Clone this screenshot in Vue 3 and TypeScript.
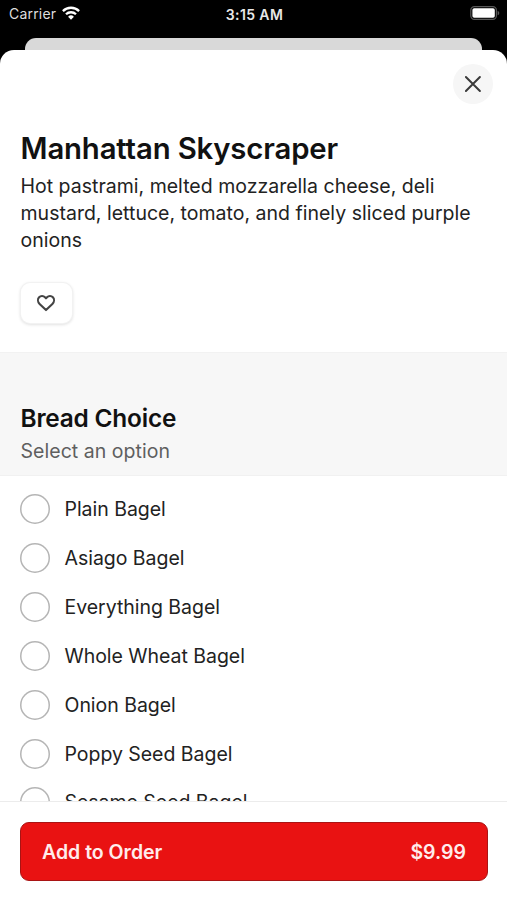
<script setup lang="ts">
import { ref } from 'vue'

const breads: string[] = [
  'Plain Bagel',
  'Asiago Bagel',
  'Everything Bagel',
  'Whole Wheat Bagel',
  'Onion Bagel',
  'Poppy Seed Bagel',
  'Sesame Seed Bagel',
]
const selected = ref<string | null>(null)
</script>

<template>
  <div class="screen">
    <header class="status">
      <div class="carrier">
        <span>Carrier</span>
        <svg class="wifi" width="18" height="14" viewBox="0 0 18 14">
          <g fill="none" stroke="#fff" stroke-width="2.3">
            <path d="M.9 5.1a11.5 11.5 0 0 1 16.2 0" />
            <path d="M4 8.3a7.1 7.1 0 0 1 10 0" />
          </g>
          <path d="M9 13.7 6.1 10.8a4.1 4.1 0 0 1 5.8 0Z" fill="#fff" />
        </svg>
      </div>
      <span class="time">3:15 AM</span>
      <svg class="battery" width="30" height="14" viewBox="0 0 30 14">
        <rect x=".8" y=".6" width="25.6" height="12.8" rx="3.6" fill="none" stroke="#585858" stroke-width="1.2" />
        <rect x="2.4" y="2.2" width="22.4" height="9.6" rx="1.8" fill="#fff" />
        <path d="M27.6 4.7c2.2.8 2.2 3.8 0 4.6Z" fill="#585858" />
      </svg>
    </header>
    <div class="behind"></div>
    <main class="sheet">
      <div class="top">
        <button class="close" aria-label="Close">
          <svg width="18" height="18" viewBox="0 0 18 18">
            <path d="m1.9 2 14 14M15.9 2l-14 14" fill="none" stroke="#3a3a3a" stroke-width="2" stroke-linecap="round" />
          </svg>
        </button>
      </div>
      <section class="item">
        <h1>Manhattan Skyscraper</h1>
        <p>Hot pastrami, melted mozzarella cheese, deli mustard, lettuce, tomato, and finely sliced purple onions</p>
        <button class="favorite" aria-label="Favorite">
          <svg width="20" height="18" viewBox="0 0 20 18">
            <path
              d="M10 16.1 3.6 9.9C1.6 7.9 1.5 4.9 3.1 3.2s4.3-1.6 5.9 0l1 1.1 1-1.1c1.6-1.6 4.3-1.7 5.9 0s1.5 4.7-.5 6.7Z"
              fill="none" stroke="#444" stroke-width="2.1" stroke-linejoin="round"
            />
          </svg>
        </button>
      </section>
      <section class="group">
        <h2>Bread Choice</h2>
        <p>Select an option</p>
      </section>
      <ul class="options">
        <li v-for="bread in breads" :key="bread" @click="selected = bread">
          <span class="radio" :class="{ on: selected === bread }"></span>
          <span>{{ bread }}</span>
        </li>
      </ul>
      <footer class="bar">
        <button class="order">
          <span>Add to Order</span>
          <span>$9.99</span>
        </button>
      </footer>
    </main>
  </div>
</template>

<style>
body {
  background: #000;
}
</style>

<style scoped>
* {
  box-sizing: border-box;
}
.screen {
  width: 507px;
  height: 900px;
  overflow: hidden;
  display: flex;
  flex-direction: column;
  background: #000;
  font-family: Inter, "Liberation Sans", sans-serif;
  color: #222;
}
button {
  font: inherit;
  padding: 0;
  border: 0;
}
h1, h2, p, ul {
  margin: 0;
  padding: 0;
}
.status {
  flex: none;
  height: 38px;
  padding: 0 7px 12px 9px;
  display: grid;
  grid-template-columns: 1fr auto 1fr;
  align-items: center;
  color: #fff;
  font-size: 14px;
}
.carrier {
  display: flex;
  align-items: center;
  gap: 6px;
  letter-spacing: .2px;
  color: #dedede;
}
.time {
  padding-top: 2px;
  font-weight: 600;
  font-size: 14px;
  letter-spacing: .4px;
  color: #e8e8e8;
}
.battery {
  justify-self: end;
}
.behind {
  flex: none;
  height: 12px;
  margin: 0 25px;
  border-radius: 11px 11px 0 0;
  background: #d9d9d9;
}
.sheet {
  flex: 1;
  min-height: 0;
  display: flex;
  flex-direction: column;
  border-radius: 14px 14px 0 0;
  background: #fff;
  overflow: hidden;
}
.top {
  flex: none;
  height: 81px;
  padding: 14px 14px 0;
  display: flex;
  justify-content: flex-end;
}
.close {
  width: 40px;
  height: 40px;
  border-radius: 50%;
  background: #f6f6f6;
  display: grid;
  place-items: center;
}
.item {
  flex: none;
  height: 221px;
  padding: 0 20.5px;
}
h1 {
  font-size: 29.3px;
  line-height: 36px;
  font-weight: 600;
  letter-spacing: -.14px;
  color: #111;
  white-space: nowrap;
}
.item p {
  margin-top: 6px;
  font-size: 19.5px;
  line-height: 27px;
  letter-spacing: .01px;
}
.favorite {
  margin-top: 29px;
  width: 51px;
  height: 40px;
  border-radius: 9px;
  background: #fff;
  box-shadow: 0 0 0 1px #f2f2f2, 0 1px 3px 1px #e2e2e2;
  display: grid;
  place-items: center;
}
.favorite svg {
  margin-bottom: 1px;
}
.group {
  flex: none;
  height: 124px;
  padding: 49px 20.5px 0;
  background: #f7f7f7;
  border-top: 1px solid #f2f2f2;
  border-bottom: 1px solid #f1f1f1;
}
h2 {
  font-size: 24.4px;
  line-height: 32px;
  font-weight: 600;
  letter-spacing: -.2px;
  color: #111;
}
.group p {
  margin-top: 4px;
  font-size: 19.5px;
  line-height: 27px;
  letter-spacing: .04px;
  color: #5f5f5f;
}
.options {
  flex: 1;
  min-height: 0;
  overflow: hidden;
  list-style: none;
  padding: 9px 20px 0;
}
.options li {
  height: 48.85px;
  display: flex;
  align-items: center;
  gap: 14.5px;
  font-size: 19.5px;
  letter-spacing: -.03px;
}
.radio {
  flex: none;
  width: 30px;
  height: 30px;
  box-shadow: inset 0 0 0 1.5px #b5b5b5;
  border-radius: 50%;
}
.radio.on {
  box-shadow: inset 0 0 0 9px #e91212;
}
.bar {
  flex: none;
  height: 99px;
  padding: 20px 19px 0 20px;
  border-top: 1px solid #ececec;
}
.order {
  width: 100%;
  height: 59px;
  padding: 0 21px;
  display: flex;
  align-items: center;
  justify-content: space-between;
  border: 1px solid #a91414;
  border-radius: 9px;
  background: #e91212;
  color: #ffecec;
  font-size: 19.5px;
  font-weight: 600;
}
</style>
